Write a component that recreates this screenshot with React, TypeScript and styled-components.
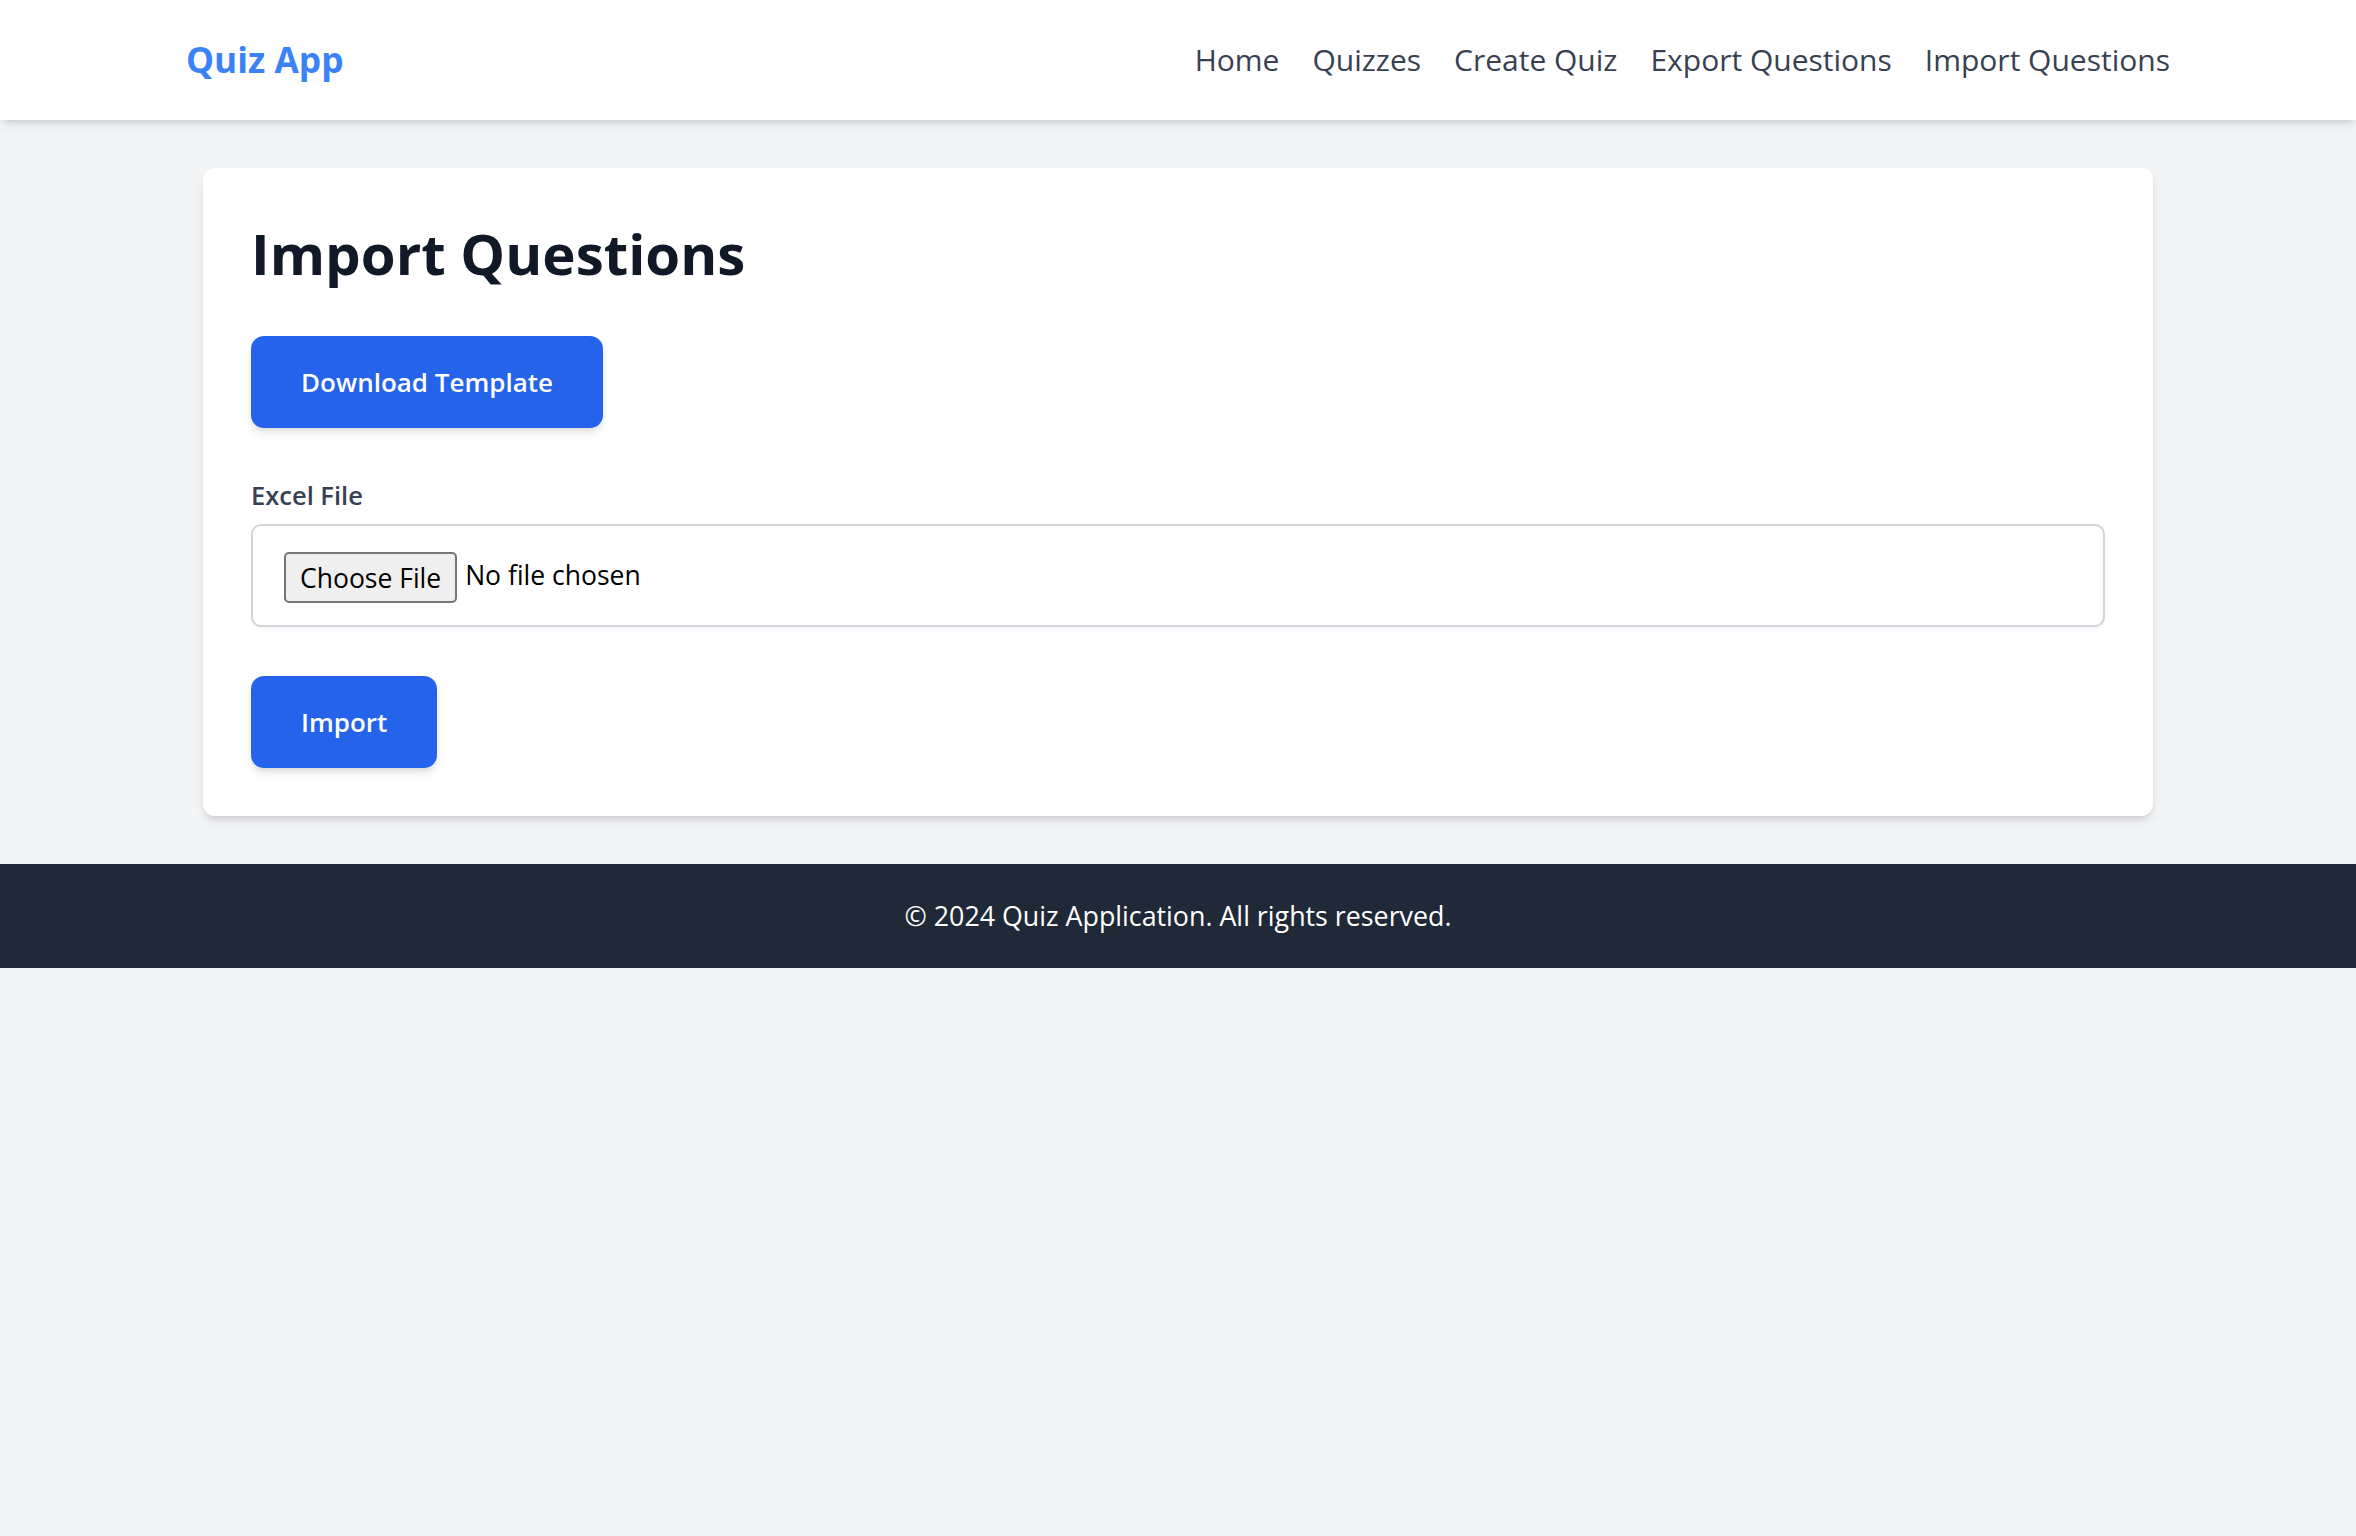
import React from "react";
import styled, { createGlobalStyle } from "styled-components";

const GlobalStyle = createGlobalStyle`
  html, body {
    margin: 0;
    padding: 0;
    background: #f3f4f6;
    font-family: "Open Sans", "Noto Sans", "Liberation Sans", sans-serif;
    color: #111827;
  }
  * { box-sizing: border-box; }
`;

const Header = styled.header`
  height: 120px;
  background: #ffffff;
  box-shadow: 0 6px 9px -1.5px rgba(0, 0, 0, 0.1), 0 3px 6px -3px rgba(0, 0, 0, 0.1);
  position: relative;
  z-index: 1;
`;

const HeaderInner = styled.div`
  max-width: 1984px;
  height: 100%;
  margin: 0 auto;
  display: flex;
  align-items: center;
  justify-content: space-between;
`;

const Logo = styled.a`
  font-size: 35.3px;
  font-weight: 700;
  color: #3b82f6;
  text-decoration: none;
  line-height: 1.35;
`;

const Nav = styled.nav`
  display: flex;
  align-items: center;
  gap: 33px;
`;

const NavLink = styled.a`
  font-size: 30px;
  color: #374151;
  text-decoration: none;
  line-height: 1.35;
`;

const Main = styled.main`
  padding: 48px 0;
`;

const Card = styled.section`
  width: 1950px;
  margin: 0 auto;
  background: #ffffff;
  border-radius: 12px;
  padding: 48px;
  box-shadow: 0 6px 9px -1.5px rgba(0, 0, 0, 0.1), 0 3px 6px -3px rgba(0, 0, 0, 0.1);
`;

const Title = styled.h1`
  margin: 0 0 45px;
  font-size: 56.4px;
  font-weight: 700;
  line-height: 75px;
  color: #111827;
`;

const PrimaryButton = styled.button<{ $mb?: number }>`
  display: inline-flex;
  align-items: center;
  justify-content: center;
  height: 92px;
  padding: 0 50px;
  border: none;
  border-radius: 13px;
  background: #2563eb;
  color: #ffffff;
  font-family: inherit;
  font-size: 26px;
  font-weight: 600;
  cursor: pointer;
  box-shadow: 0 6px 9px -1.5px rgba(0, 0, 0, 0.1), 0 3px 6px -3px rgba(0, 0, 0, 0.1);
  margin-bottom: ${(p) => p.$mb ?? 0}px;
`;

const Field = styled.div`
  margin-bottom: 49px;
`;

const Label = styled.label`
  display: block;
  margin-bottom: 11px;
  font-size: 25.5px;
  font-weight: 600;
  line-height: 36px;
  color: #374151;
`;

const FileInput = styled.input`
  display: block;
  width: 100%;
  height: 103px;
  padding: 24px 24px 24px 31px;
  border: 2px solid #d1d5db;
  border-radius: 10px;
  background: #ffffff;
  font-family: inherit;
  font-size: 26.5px;
  line-height: 51px;
  color: #000000;
  box-shadow: 0 1.5px 3px rgba(0, 0, 0, 0.04);

  &::file-selector-button {
    height: 51px;
    padding: 0 14px;
    margin: 0 8px 0 0;
    border: 2px solid #767676;
    border-radius: 5px;
    background: #efefef;
    color: #000000;
    font-family: inherit;
    font-size: 26.5px;
    vertical-align: middle;
  }
`;

const Footer = styled.footer`
  height: 104px;
  background: #1f2937;
  display: flex;
  align-items: center;
  justify-content: center;
`;

const FooterText = styled.p`
  margin: 0;
  font-size: 26.8px;
  line-height: 36px;
  color: #ffffff;
`;

const links = ["Home", "Quizzes", "Create Quiz", "Export Questions", "Import Questions"];

export default function App() {
  return (
    <>
      <GlobalStyle />
      <Header>
        <HeaderInner>
          <Logo href="#">Quiz App</Logo>
          <Nav>
            {links.map((l) => (
              <NavLink key={l} href="#">
                {l}
              </NavLink>
            ))}
          </Nav>
        </HeaderInner>
      </Header>
      <Main>
        <Card>
          <Title>Import Questions</Title>
          <div>
            <PrimaryButton type="button" $mb={49}>
              Download Template
            </PrimaryButton>
          </div>
          <Field>
            <Label htmlFor="excel">Excel File</Label>
            <FileInput id="excel" type="file" accept=".xlsx,.xls" />
          </Field>
          <PrimaryButton type="button">Import</PrimaryButton>
        </Card>
      </Main>
      <Footer>
        <FooterText>© 2024 Quiz Application. All rights reserved.</FooterText>
      </Footer>
    </>
  );
}
